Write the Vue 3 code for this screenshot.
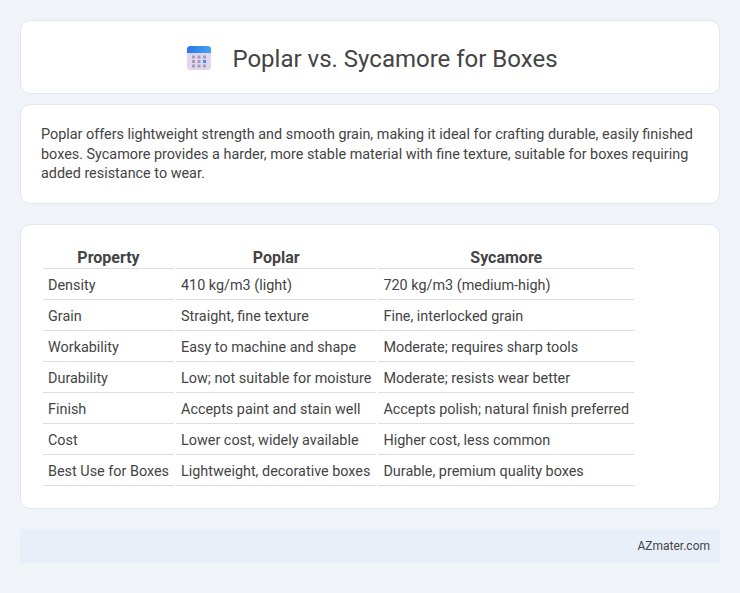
<script setup>
const rows = [
  ['Density', '410 kg/m3 (light)', '720 kg/m3 (medium-high)'],
  ['Grain', 'Straight, fine texture', 'Fine, interlocked grain'],
  ['Workability', 'Easy to machine and shape', 'Moderate; requires sharp tools'],
  ['Durability', 'Low; not suitable for moisture', 'Moderate; resists wear better'],
  ['Finish', 'Accepts paint and stain well', 'Accepts polish; natural finish preferred'],
  ['Cost', 'Lower cost, widely available', 'Higher cost, less common'],
  ['Best Use for Boxes', 'Lightweight, decorative boxes', 'Durable, premium quality boxes'],
]
</script>

<template>
  <div class="page">
    <header class="card title-card">
      <svg class="logo" width="24" height="24" viewBox="0 0 24 24">
        <defs>
          <linearGradient id="top" x1="0" y1="0" x2="1" y2="0">
            <stop offset="0" stop-color="#2f74e8" />
            <stop offset="1" stop-color="#3fa4f2" />
          </linearGradient>
        </defs>
        <rect x="0" y="0" width="24" height="24" rx="3.5" fill="#e0d6f0" />
        <path d="M0 7V3.5A3.5 3.5 0 0 1 3.5 0H20.5a3.5 3.5 0 0 1 3.5 3.5V7Z" fill="url(#top)" />
        <g fill="#a79db5">
          <rect x="5" y="9.5" width="3" height="3" />
          <rect x="10.5" y="9.5" width="3" height="3" />
          <rect x="16" y="9.5" width="3" height="3" />
          <rect x="5" y="14" width="3" height="3" />
          <rect x="10.5" y="14" width="3" height="3" />
          <rect x="16" y="14" width="3" height="3" fill="#3f8eea" />
          <rect x="5" y="18.5" width="3" height="3" />
          <rect x="10.5" y="18.5" width="3" height="3" />
          <rect x="16" y="18.5" width="3" height="3" />
        </g>
      </svg>
      <h1>Poplar vs. Sycamore for Boxes</h1>
    </header>

    <section class="card intro">
      <p>Poplar offers lightweight strength and smooth grain, making it ideal for crafting durable, easily finished boxes. Sycamore provides a harder, more stable material with fine texture, suitable for boxes requiring added resistance to wear.</p>
    </section>

    <section class="card table-card">
      <table>
        <thead>
          <tr>
            <th>Property</th>
            <th>Poplar</th>
            <th>Sycamore</th>
          </tr>
        </thead>
        <tbody>
          <tr v-for="row in rows" :key="row[0]">
            <td v-for="cell in row" :key="cell">{{ cell }}</td>
          </tr>
        </tbody>
      </table>
    </section>

    <footer class="foot">AZmater.com</footer>
  </div>
</template>

<style>
html, body {
  margin: 0;
  background: #f0f3f8;
}
</style>

<style scoped>
.page {
  padding: 20px 20px 30px;
  font-family: Roboto, sans-serif;
  color: #444;
}

.card {
  background: #fff;
  border: 1px solid #e2e6f0;
  border-radius: 10px;
  box-sizing: border-box;
}

.title-card {
  height: 74px;
  display: flex;
  align-items: center;
  justify-content: center;
  gap: 21px;
  padding-left: 5px;
  margin-bottom: 10px;
}

.logo {
  display: block;
  margin-top: 2px;
}

h1 {
  margin: 4px 0 0;
  font-size: 24px;
  font-weight: 400;
  color: #444;
}

.intro {
  height: 100px;
  padding: 20px 20px;
  margin-bottom: 20px;
}

.intro p {
  margin: 0;
  font-size: 14.4px;
  line-height: 19.5px;
}

.table-card {
  height: 285px;
  padding: 20px;
  margin-bottom: 20px;
}

table {
  border-collapse: separate;
  border-spacing: 2px;
  font-size: 14.4px;
}

th {
  font-size: 16px;
  font-weight: 700;
  text-align: center;
  padding: 1px 5px 1px;
  line-height: 19px;
  border-bottom: 1px solid #ddd;
}

td {
  padding: 6px 5px 4px;
  line-height: 18px;
  border-bottom: 1px solid #ddd;
}

.foot {
  height: 34px;
  background: #e9eff9;
  display: flex;
  align-items: center;
  justify-content: flex-end;
  padding-right: 10px;
  font-size: 12px;
  color: #444;
}
</style>
